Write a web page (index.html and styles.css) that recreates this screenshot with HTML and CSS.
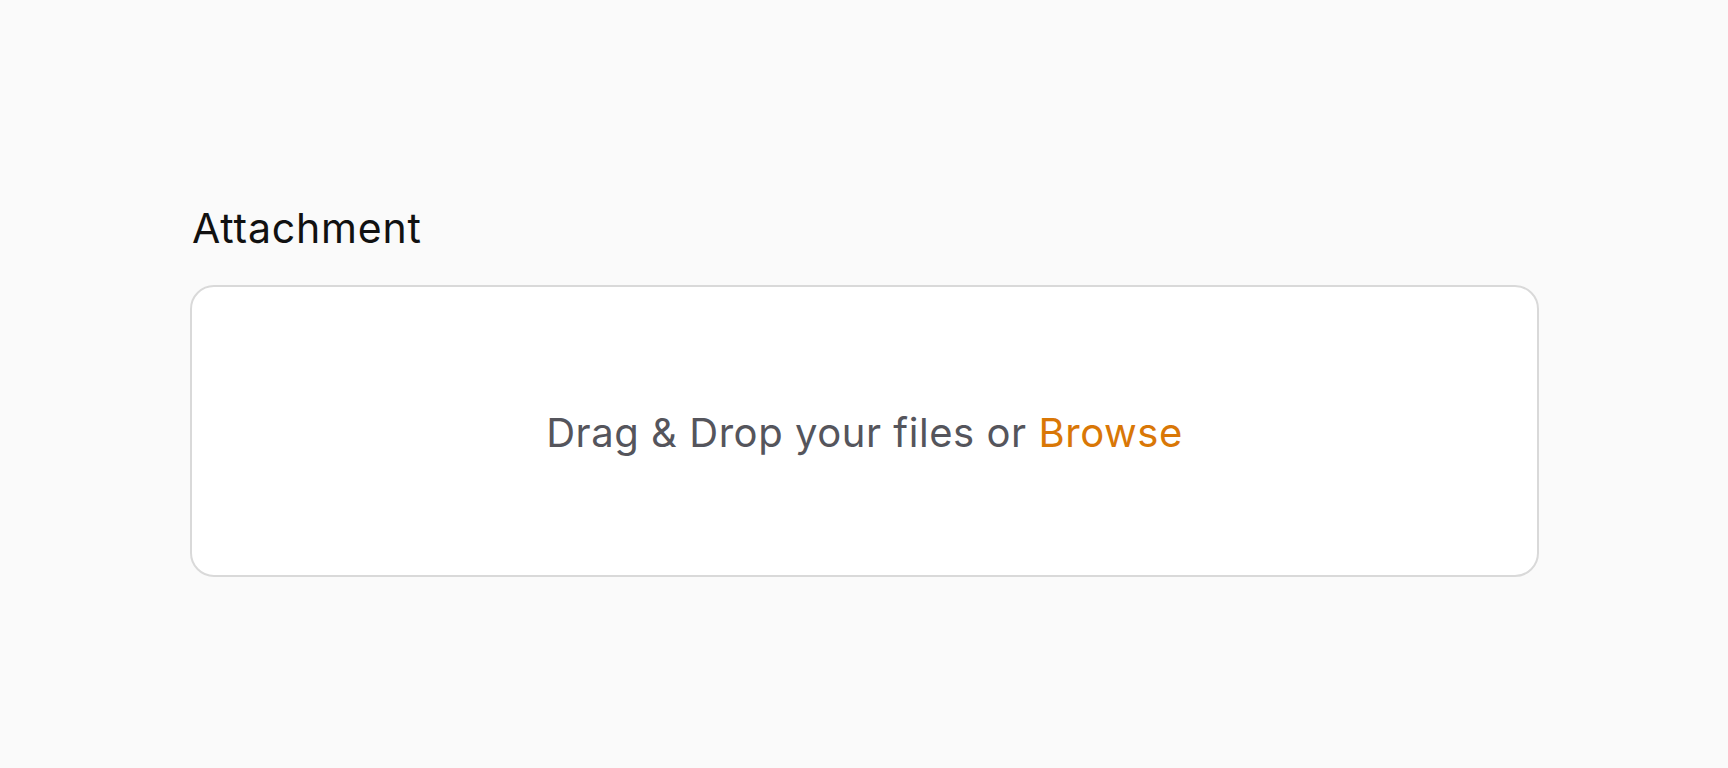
FILE: index.html
```html
<!DOCTYPE html>
<html lang="en">
<head>
<meta charset="utf-8">
<title>Attachment</title>
<link rel="stylesheet" href="styles.css">
</head>
<body>
<div class="page">
  <div class="field">
    <label class="field-label">Attachment</label>
    <div class="dropzone">
      <p class="dropzone-text">Drag &amp; Drop your files or <span class="browse">Browse</span></p>
    </div>
  </div>
</div>
</body>
</html>
```
FILE: styles.css
```css
html, body {
  margin: 0;
  padding: 0;
  background: #fafafa;
}
body {
  font-family: Inter, "Noto Sans", sans-serif;
}
.page {
  padding: 204px 189px 0 190px;
}
.field {
  display: flex;
  flex-direction: column;
  gap: 33px;
}
.field-label {
  font-size: 41px;
  line-height: 48px;
  letter-spacing: 0.8px;
  padding-left: 2px;
  color: #111;
  display: block;
}
.dropzone {
  background: #fff;
  border: 2px solid #d9d9d9;
  border-radius: 24px;
  display: flex;
  align-items: center;
  justify-content: center;
  padding-top: 3px;
  box-sizing: border-box;
  height: 292px;
}
.dropzone-text {
  margin: 0;
  font-size: 40px;
  line-height: 48px;
  letter-spacing: 0.55px;
  color: #55555c;
}
.browse {
  color: #d97706;
}
```
